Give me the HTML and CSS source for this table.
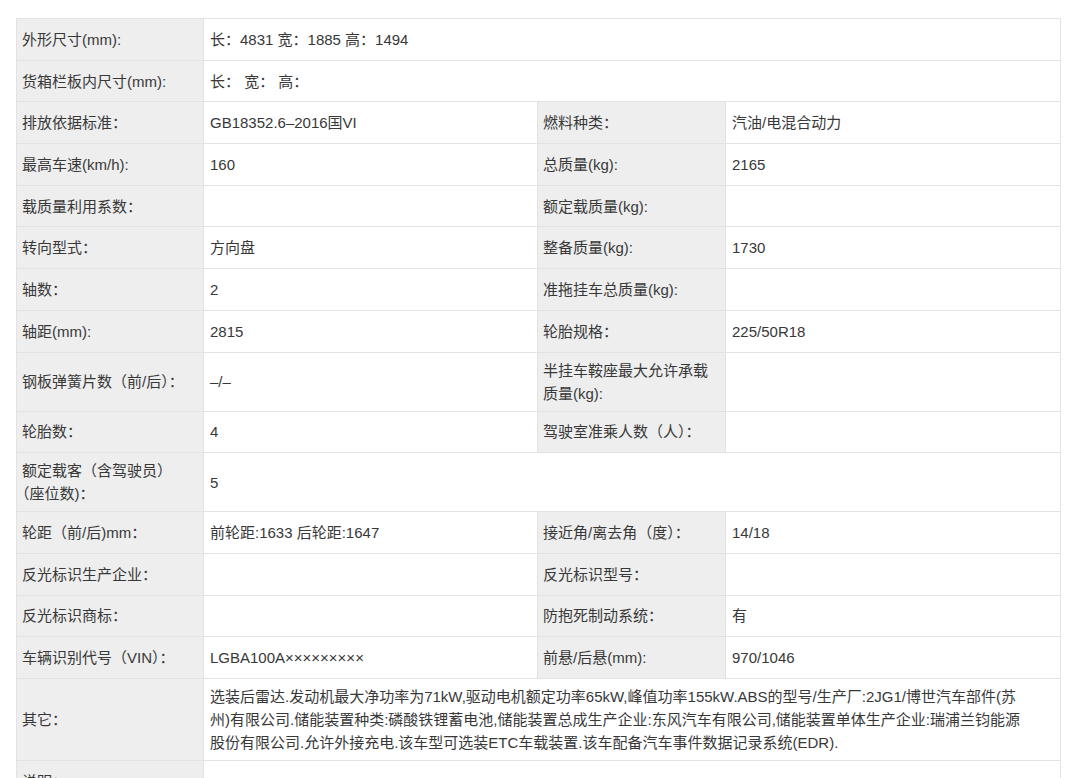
FILE: index.html
```html
<!DOCTYPE html>
<html lang="zh-CN">
<head>
<meta charset="utf-8">
<title>车辆参数</title>
<link rel="stylesheet" href="styles.css">
</head>
<body>
<div class="page">
<table class="spec">
<colgroup>
<col class="c-label"><col class="c-value"><col class="c-label2"><col class="c-value2">
</colgroup>
<tbody>
<tr><th>外形尺寸(mm):</th><td colspan="3">长：4831 宽：1885 高：1494</td></tr>
<tr><th>货箱栏板内尺寸(mm):</th><td colspan="3">长： 宽： 高：</td></tr>
<tr><th>排放依据标准：</th><td>GB18352.6–2016国VI</td><th>燃料种类：</th><td>汽油/电混合动力</td></tr>
<tr><th>最高车速(km/h):</th><td>160</td><th>总质量(kg):</th><td>2165</td></tr>
<tr><th>载质量利用系数：</th><td></td><th>额定载质量(kg):</th><td></td></tr>
<tr><th>转向型式：</th><td>方向盘</td><th>整备质量(kg):</th><td>1730</td></tr>
<tr><th>轴数：</th><td>2</td><th>准拖挂车总质量(kg):</th><td></td></tr>
<tr><th>轴距(mm):</th><td>2815</td><th>轮胎规格：</th><td>225/50R18</td></tr>
<tr><th>钢板弹簧片数（前/后）：</th><td>–/–</td><th>半挂车鞍座最大允许承载质量(kg):</th><td></td></tr>
<tr><th>轮胎数：</th><td>4</td><th>驾驶室准乘人数（人）：</th><td></td></tr>
<tr><th>额定载客（含驾驶员）<span class="nobr">（座位数)：</span></th><td colspan="3">5</td></tr>
<tr><th>轮距（前/后)mm：</th><td>前轮距:1633 后轮距:1647</td><th>接近角/离去角（度）：</th><td>14/18</td></tr>
<tr><th>反光标识生产企业：</th><td></td><th>反光标识型号：</th><td></td></tr>
<tr><th>反光标识商标：</th><td></td><th>防抱死制动系统：</th><td>有</td></tr>
<tr><th>车辆识别代号（VIN）：</th><td>LGBA100A×××××××××</td><th>前悬/后悬(mm):</th><td>970/1046</td></tr>
<tr><th>其它：</th><td colspan="3" class="long">选装后雷达.发动机最大净功率为71kW,驱动电机额定功率65kW,峰值功率155kW.ABS的型号/生产厂:2JG1/博世汽车部件(苏州)有限公司.储能装置种类:磷酸铁锂蓄电池,储能装置总成生产企业:东风汽车有限公司,储能装置单体生产企业:瑞浦兰钧能源股份有限公司.允许外接充电.该车型可选装ETC车载装置.该车配备汽车事件数据记录系统(EDR).</td></tr>
<tr><th>说明：</th><td colspan="3"></td></tr>
</tbody>
</table>
</div>
</body>
</html>
```

FILE: styles.css
```css
html, body {
  margin: 0;
  padding: 0;
  background: #ffffff;
}
.page {
  padding: 18px 10px 0 16px;
}
.spec {
  width: 1044px;
  border-collapse: collapse;
  table-layout: fixed;
  font-family: "Liberation Sans", "Noto Sans CJK SC", sans-serif;
  font-size: 15px;
  color: #383838;
  border: 1px solid #e3e3e3;
}
.c-label { width: 187px; }
.c-value { width: 334px; }
.c-label2 { width: 188px; }
.c-value2 { width: 335px; }
.spec th,
.spec td {
  height: 28.7px;
  padding: 6px 4px 6px 6px;
  border: 1px solid #e3e3e3;
  line-height: 23px;
  text-align: left;
  vertical-align: middle;
  font-weight: normal;
  word-break: break-all;
}
.spec th {
  background: #eeeeee;
  padding-left: 5px;
}
.spec td {
  background: #ffffff;
}
.nobr {
  white-space: nowrap;
}
.spec td.long {
  line-height: 23px;
  padding-right: 26px;
}
```
